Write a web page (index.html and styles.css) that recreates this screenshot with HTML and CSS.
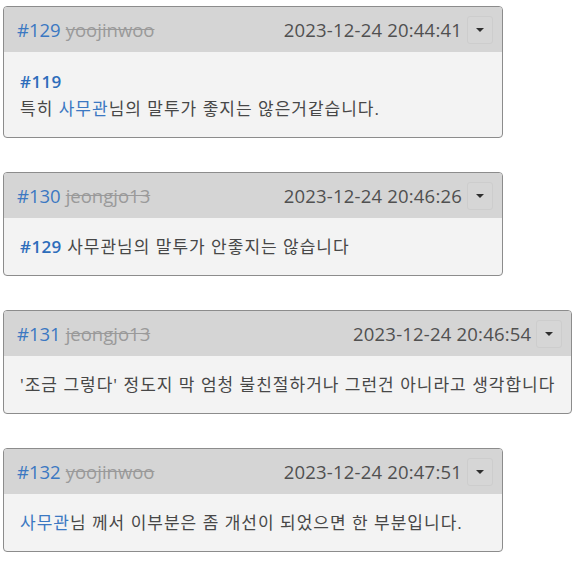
FILE: index.html
```html
<!DOCTYPE html>
<html lang="ko">
<head>
    <meta charset="UTF-8">
    <meta name="viewport" content="width=device-width, initial-scale=1.0">
    <title>댓글</title>
    <link rel="stylesheet" href="styles.css">
</head>
<body>
    <div class="comment-list">
        <div class="comment">
            <div class="comment-head">
                <a class="num" href="#">#129</a>
                <span class="user">yoojinwoo</span>
                <span class="date">2023-12-24 20:44:41</span>
                <button class="menu-btn"><span class="caret"></span></button>
            </div>
            <div class="comment-body">
                <div class="ref-line"><a class="ref" href="#">#119</a></div>
                <p>특히 <a class="link" href="#">사무관</a>님의 말투가 좋지는 않은거같습니다.</p>
            </div>
        </div>

        <div class="comment">
            <div class="comment-head">
                <a class="num" href="#">#130</a>
                <span class="user">jeongjo13</span>
                <span class="date">2023-12-24 20:46:26</span>
                <button class="menu-btn"><span class="caret"></span></button>
            </div>
            <div class="comment-body">
                <p><a class="ref" href="#">#129</a> 사무관님의 말투가 안좋지는 않습니다</p>
            </div>
        </div>

        <div class="comment">
            <div class="comment-head">
                <a class="num" href="#">#131</a>
                <span class="user">jeongjo13</span>
                <span class="date">2023-12-24 20:46:54</span>
                <button class="menu-btn"><span class="caret"></span></button>
            </div>
            <div class="comment-body">
                <p>'조금 그렇다' 정도지 막 엄청 불친절하거나 그런건 아니라고 생각합니다</p>
            </div>
        </div>

        <div class="comment">
            <div class="comment-head">
                <a class="num" href="#">#132</a>
                <span class="user">yoojinwoo</span>
                <span class="date">2023-12-24 20:47:51</span>
                <button class="menu-btn"><span class="caret"></span></button>
            </div>
            <div class="comment-body">
                <p><a class="link" href="#">사무관</a>님 께서 이부분은 좀 개선이 되었으면 한 부분입니다.</p>
            </div>
        </div>
    </div>
</body>
</html>
```

FILE: styles.css
```css
* {
    box-sizing: border-box;
    margin: 0;
    padding: 0;
}

body {
    font-family: 'Open Sans', 'Noto Sans CJK KR', sans-serif;
    background: #fff;
    color: #474747;
    padding: 6px 3px;
}

a {
    text-decoration: none;
}

.comment-list {
    display: flex;
    flex-direction: column;
    align-items: flex-start;
    gap: 34px;
}

.comment {
    min-width: 500px;
    border: 1px solid #8c8c8c;
    border-radius: 4px;
    overflow: hidden;
    background: #f3f3f3;
}

.comment-head {
    display: flex;
    align-items: center;
    height: 45px;
    padding: 0 9px 0 13px;
    background: #d5d5d5;
    font-size: 18.5px;
}

.num {
    color: #3b78c2;
}

.user {
    margin-left: 5px;
    color: #9a9a9a;
    text-decoration: line-through;
}

.date {
    margin-left: auto;
    padding-left: 24px;
    color: #505050;
    letter-spacing: 0.2px;
}

.menu-btn {
    margin-left: 5px;
    width: 26px;
    height: 28px;
    display: flex;
    align-items: center;
    justify-content: center;
    background: #d6d6d6;
    border: 1px solid #cdcdcd;
    border-radius: 3px;
}

.caret {
    width: 0;
    height: 0;
    border-left: 4px solid transparent;
    border-right: 4px solid transparent;
    border-top: 4px solid #2f2f2f;
}

.comment-body {
    padding: 16px 16px;
    font-size: 17px;
    line-height: 25px;
    letter-spacing: 1px;
}

.ref-line {
    line-height: 28px;
}

.ref {
    color: #2d6dbb;
    font-weight: 600;
    letter-spacing: 0.4px;
}

.link {
    color: #3b78c2;
}
```
